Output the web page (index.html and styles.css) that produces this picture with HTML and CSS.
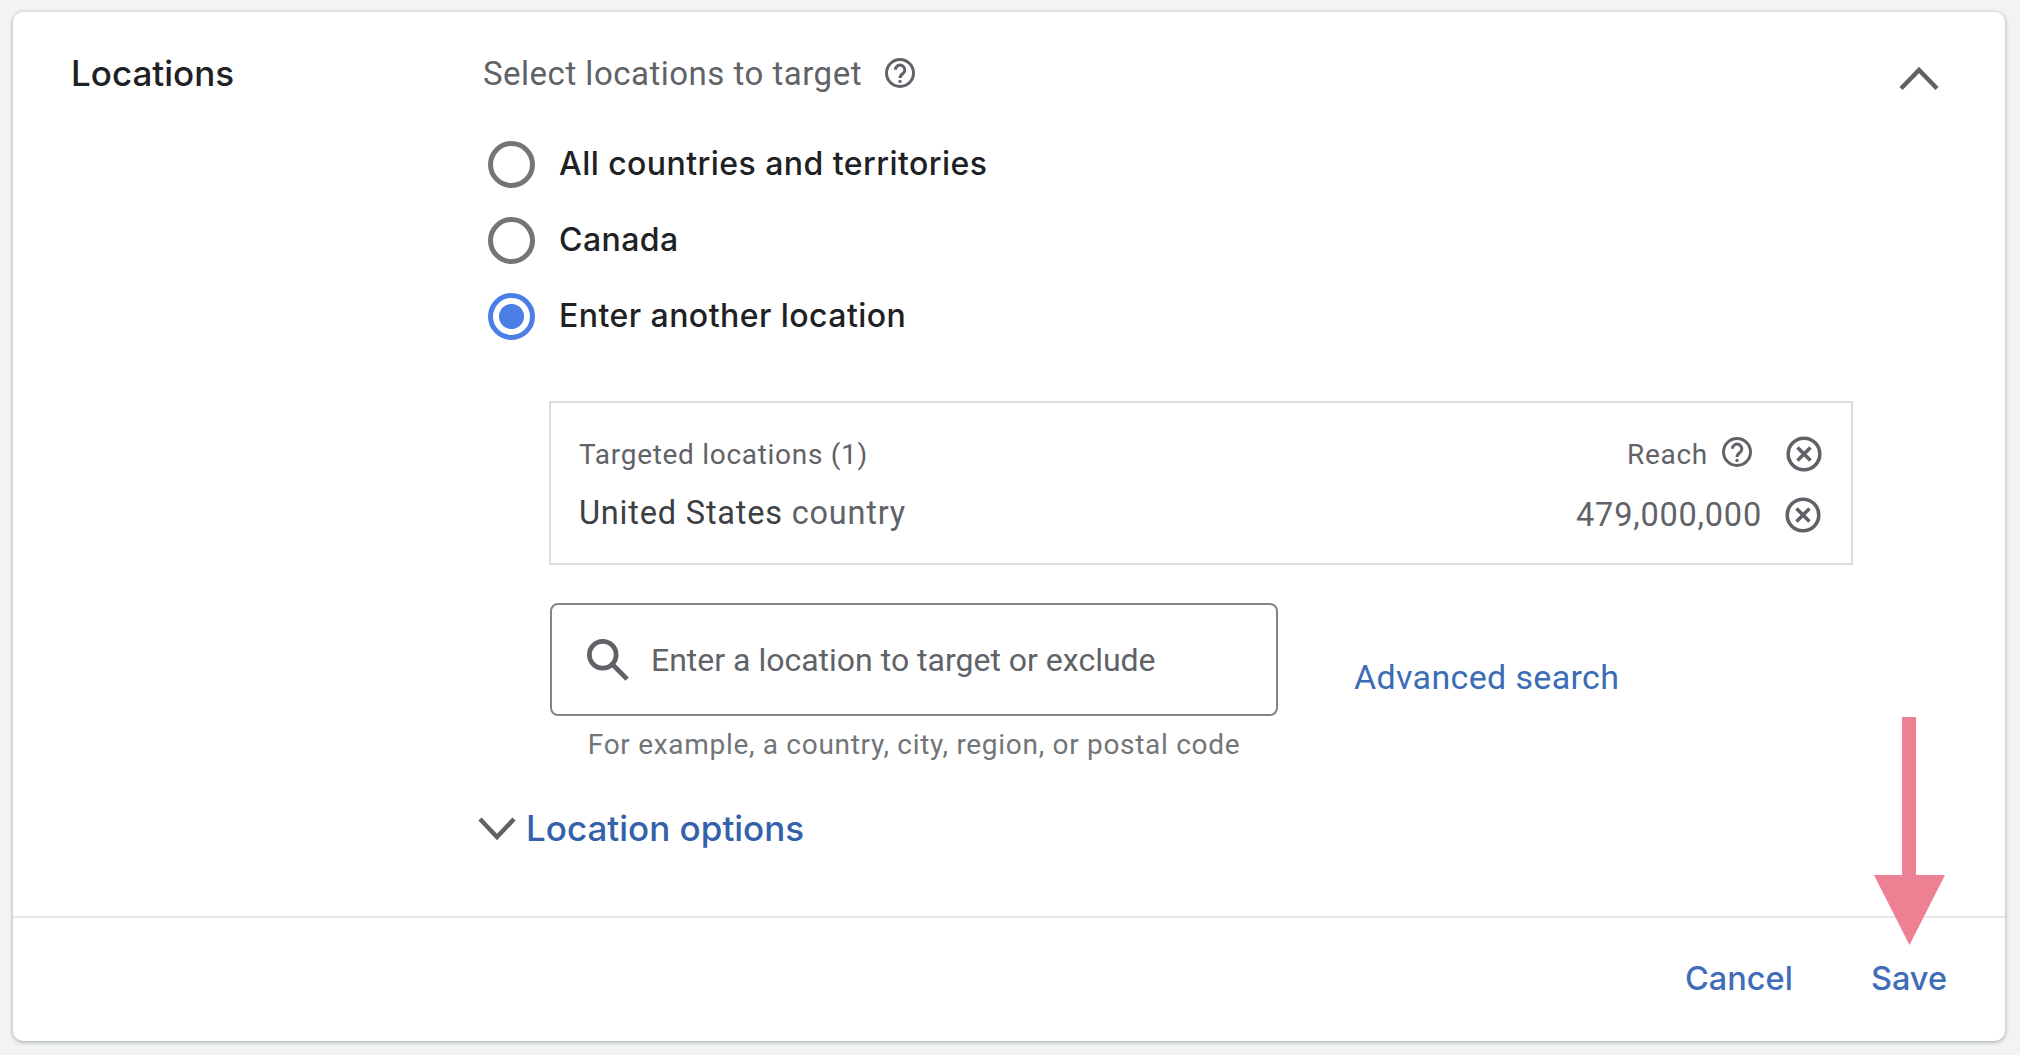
FILE: index.html
```html
<!DOCTYPE html>
<html lang="en">
<head>
<meta charset="utf-8">
<title>Locations</title>
<link rel="stylesheet" href="styles.css">
</head>
<body>
<section class="card">
  <div class="main">
    <h2 class="title">Locations</h2>
    <div class="content">
      <div class="prompt">
        <span>Select locations to target</span>
        <svg class="help" viewBox="0 0 32 32"><circle cx="16" cy="16" r="13.5"/><path d="M11.4 12.8a4.7 4.7 0 1 1 7.6 3.7c-1.9 1.4-3 2.2-3 4.5"/><circle class="dot" cx="16" cy="24.4" r="1.7"/></svg>
      </div>
      <div class="radios">
        <label class="radio"><span class="ring"></span>All countries and territories</label>
        <label class="radio"><span class="ring"></span>Canada</label>
        <label class="radio"><span class="ring on"></span>Enter another location</label>
      </div>
      <div class="panel">
        <div class="row head">
          <span class="grow">Targeted locations (1)</span>
          <span>Reach</span>
          <svg class="help small" viewBox="0 0 32 32"><circle cx="16" cy="16" r="13.5"/><path d="M11.4 12.8a4.7 4.7 0 1 1 7.6 3.7c-1.9 1.4-3 2.2-3 4.5"/><circle class="dot" cx="16" cy="24.4" r="1.7"/></svg>
          <svg class="close" viewBox="0 0 36 36"><circle cx="18" cy="18" r="15.8"/><path d="M11.5 11.5l13 13M24.500 11.500l-13 13"/></svg>
        </div>
        <div class="row item">
          <span class="grow"><span class="place">United States</span> country</span>
          <span class="num">479,000,000</span>
          <svg class="close" viewBox="0 0 36 36"><circle cx="18" cy="18" r="15.8"/><path d="M11.5 11.5l13 13M24.500 11.500l-13 13"/></svg>
        </div>
      </div>
      <div class="search-row">
        <div class="search-col">
          <div class="search">
            <svg class="lens" viewBox="0 0 44 44"><circle cx="16.500" cy="16.500" r="14"/><path d="M26.500 26.500L42 42"/></svg>
            <span>Enter a location to target or exclude</span>
          </div>
          <p class="hint">For example, a country, city, region, or postal code</p>
        </div>
        <a class="link advanced">Advanced search</a>
      </div>
      <div class="options">
        <svg class="chev-down" viewBox="0 0 38 24"><path d="M2 3l17 18L36 3"/></svg>
        <a class="link strong">Location options</a>
      </div>
    </div>
    <svg class="chev-up" viewBox="0 0 40 24"><path d="M2 21.500L20 3l18 18.500"/></svg>
  </div>
  <footer class="actions">
    <a class="action">Cancel</a>
    <a class="action">Save</a>
  </footer>
  <svg class="arrow" viewBox="0 0 71 228"><path d="M28 0h14v158h29l-35.500 70L0 158h28z"/></svg>
</section>
</body>
</html>
```
FILE: styles.css
```css
* { box-sizing: border-box; }
html, body { height: 100%; }
body {
  margin: 0;
  padding: 12px 15px 14px 13px;
  background: #f1f3f4;
  font-family: Roboto, "Liberation Sans", sans-serif;
  overflow: hidden;
}
.card {
  position: relative;
  height: 100%;
  display: flex;
  flex-direction: column;
  background: #fff;
  border-radius: 10px;
  box-shadow: 0 1px 4px rgba(60, 64, 67, .45);
}
.main {
  flex: 1;
  display: flex;
  align-items: flex-start;
  padding: 0 0 0 58px;
}
.title {
  width: 412px;
  margin: 40px 0 0;
  font: 500 35px/42px Inter, Roboto, sans-serif;
  color: #202124;
}
.content { width: 1369px; }
.prompt {
  display: flex;
  align-items: center;
  gap: 22px;
  height: 42px;
  margin-top: 40px;
  font-size: 33px;
  letter-spacing: .5px;
  color: #5f6368;
}
.help { width: 32px; height: 32px; flex: none; }
.help circle, .help path {
  fill: none;
  stroke: #5f6368;
  stroke-width: 3;
}
.help .dot { fill: #5f6368; stroke: none; }
.radios {
  display: flex;
  flex-direction: column;
  gap: 29px;
  margin: 46px 0 0 5px;
}
.radio {
  display: flex;
  align-items: center;
  gap: 24px;
  height: 47px;
  font-family: Inter, Roboto, sans-serif;
  font-size: 32px;
  letter-spacing: .45px;
  font-weight: 500;
  color: #202124;
}
.ring {
  width: 47px;
  height: 47px;
  margin-top: 1px;
  border: 5px solid #757575;
  border-radius: 50%;
  flex: none;
}
.ring.on {
  border-color: #4c7fe6;
  background: radial-gradient(circle, #4c7fe6 0 12px, #fff 13px);
}
.panel {
  width: 1304px;
  height: 164px;
  margin: 62px 0 0 66px;
  padding: 28px 29px 0 28px;
  border: 2px solid #dadce0;
  color: #5f6368;
}
.row { display: flex; align-items: center; }
.grow { flex: 1; }
.head { height: 46px; font-size: 28px; letter-spacing: .7px; }
.item { height: 58px; margin-top: 7px; padding-right: 1px; font-size: 32.500px; letter-spacing: .8px; }
.place { color: #3c4043; }
.num { margin-top: 4px; }
.head .help.small { margin: -4px 33px 0 13px; }
.close { width: 36px; height: 36px; flex: none; margin-left: 23px; }
.item .close { margin-top: 4px; }
.head .close { margin-left: 0; }
.close circle, .close path { fill: none; stroke: #5f6368; stroke-width: 3.600; }
.search-row {
  display: flex;
  align-items: flex-start;
  margin: 38px 0 0 67px;
}
.search-col { width: 728px; }
.search {
  display: flex;
  align-items: center;
  gap: 22px;
  height: 113px;
  padding-left: 35px;
  border: 2px solid #80868b;
  border-radius: 8px;
  font-size: 32px;
  color: #5f6368;
}
.lens { width: 42px; height: 42px; flex: none; }
.lens circle, .lens path { fill: none; stroke: #5f6368; stroke-width: 5; }
.hint {
  margin: 12px 0 0;
  text-align: center;
  font-size: 28px;
  letter-spacing: .7px;
  line-height: 34px;
  color: #70757a;
}
.link { color: #3b6cb5; font-size: 34px; letter-spacing: .35px; }
.advanced { margin: 53px 0 0 76px; line-height: 42px; }
.options {
  display: flex;
  align-items: center;
  gap: 10px;
  margin: 45px 0 0 -5px;
  height: 42px;
}
.strong { font-family: Inter, Roboto, sans-serif; font-weight: 500; color: #3362ab; font-size: 35px; letter-spacing: 0; }
.chev-down { width: 38px; height: 24px; flex: none; }
.chev-down path, .chev-up path { fill: none; stroke: #5f6368; stroke-width: 4.500; }
.chev-up { width: 40px; height: 24px; flex: none; margin-top: 55px; margin-left: 47px; }
.actions {
  display: flex;
  justify-content: flex-end;
  align-items: center;
  gap: 78px;
  height: 125px;
  padding: 0 58px 2px 0;
  border-top: 2px solid #e3e5e8;
}
.action { font-family: Inter, Roboto, sans-serif; font-size: 32.500px; font-weight: 500; color: #3f6db8; }
.arrow {
  position: absolute;
  left: 1861px;
  top: 705px;
  width: 71px;
  height: 228px;
  fill: #ee8093;
}
```
